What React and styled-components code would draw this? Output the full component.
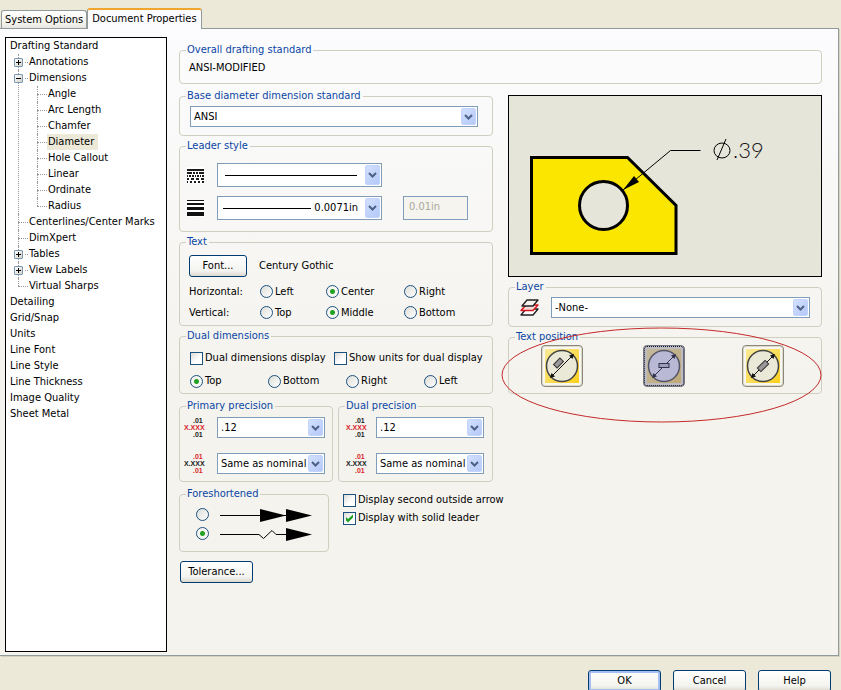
import React, { useId } from "react";
import styled, { createGlobalStyle, css } from "styled-components";

const colors = {
  face: "#ece9d8",
  border: "#d0cfbf",
  caption: "#0a46a5",
  field: "#7f9db9",
  buttonEdge: "#003c74",
};

const GlobalStyle = createGlobalStyle`
  *, *::before, *::after { box-sizing: border-box; }
  html { height: 100%; }
  body {
    margin: 0;
    height: 100%;
    overflow: hidden;
    background: ${colors.face};
    color: #000;
    font: 11px/14px "DejaVu Sans Condensed", "DejaVu Sans", sans-serif;
  }
  button, input, select { font: inherit; color: inherit; margin: 0; }
  svg { display: block; }
`;

/* ---------- window frame ---------- */

const Dialog = styled.div`
  display: flex;
  flex-direction: column;
  height: 100vh;
  padding: 8px 2px 0 0;
`;

const TabBar = styled.div`
  display: flex;
  align-items: flex-end;
  padding-left: 1px;
`;

const Tab = styled.button`
  position: relative;
  height: 18px;
  padding: 0 3px;
  border: 1px solid #919b9c;
  border-bottom: 0;
  border-radius: 3px 3px 0 0;
  background: linear-gradient(#fff, #f1f0ea 80%, #e6e4dc);
  white-space: nowrap;
  ${(p) =>
    p.$active &&
    css`
      height: 21px;
      margin-bottom: -1px;
      padding: 0 4px 2px;
      border-top: 2px solid #f0a52c;
      background: #fcfcfe;
      z-index: 1;
    `}
`;

const Page = styled.main`
  flex: 1;
  min-height: 0;
  display: flex;
  gap: 12px;
  padding: 8px 16px 3px 5px;
  border: 1px solid #919b9c;
  border-left: 0;
  background: linear-gradient(#fcfcfe, #f4f3ee 55%, #f4f3ee);
  box-shadow: 1px 1px 0 #d5d2c2;
`;

const Footer = styled.footer`
  display: flex;
  flex: none;
  justify-content: flex-end;
  gap: 12px;
  height: 34px;
  padding: 14px 8px 0 0;
`;

const PushButton = styled.button`
  flex: none;
  width: ${(p) => p.$width}px;
  height: 22px;
  padding: 0;
  border: 1px solid ${colors.buttonEdge};
  border-radius: 3px;
  background: linear-gradient(#fff, #f3f3ef 75%, #dcd8ce);
  box-shadow: ${(p) => (p.$primary ? "inset 0 0 0 2px #a5bff0" : "none")};
`;

/* ---------- navigation tree ---------- */

const TreeBox = styled.nav`
  flex: none;
  width: 162px;
  border: 1px solid #000;
  background: #fff;
`;

const Branch = styled.ul`
  list-style: none;
  margin: 0;
  padding: ${(p) => (p.$root ? "0 4px" : p.$deep ? "0 0 0 19px" : "0")};
`;

const Node = styled.li`
  position: relative;
  ${(p) =>
    !p.$root &&
    css`
      &::before {
        content: "";
        position: absolute;
        left: 8px;
        top: 0;
        height: ${p.$last ? "8px" : "100%"};
        border-left: 1px dotted #999;
      }
    `}
`;

const NodeRow = styled.div`
  display: flex;
  align-items: center;
  height: 16px;
  padding-left: ${(p) => (p.$root ? 0 : 8)}px;
`;

const Stem = styled.span`
  width: 10px;
  border-top: 1px dotted #999;
`;

const Toggle = styled.button`
  position: relative;
  flex: none;
  width: 9px;
  height: 9px;
  margin: 0 2px 0 -4px;
  padding: 0;
  border: 1px solid #7898b5;
  border-radius: 1px;
  background: linear-gradient(135deg, #fff, #d6d2c6);
`;

const ToggleStem = styled(Stem)`
  width: 3px;
`;

const NodeLink = styled.a`
  padding: 1px 4px 1px ${(p) => (p.$root ? 0 : 1)}px;
  color: inherit;
  text-decoration: none;
  white-space: nowrap;
  background: ${(p) => (p.$current ? colors.face : "transparent")};
`;

const tree = [
  {
    label: "Drafting Standard",
    children: [
      { label: "Annotations", state: "closed" },
      {
        label: "Dimensions",
        state: "open",
        children: [
          { label: "Angle" },
          { label: "Arc Length" },
          { label: "Chamfer" },
          { label: "Diameter", current: true },
          { label: "Hole Callout" },
          { label: "Linear" },
          { label: "Ordinate" },
          { label: "Radius" },
        ],
      },
      { label: "Centerlines/Center Marks" },
      { label: "DimXpert" },
      { label: "Tables", state: "closed" },
      { label: "View Labels", state: "closed" },
      { label: "Virtual Sharps" },
    ],
  },
  { label: "Detailing" },
  { label: "Grid/Snap" },
  { label: "Units" },
  { label: "Line Font" },
  { label: "Line Style" },
  { label: "Line Thickness" },
  { label: "Image Quality" },
  { label: "Sheet Metal" },
];

function TreeNodes({ items, level = 0 }) {
  const root = level === 0;
  return (
    <Branch $root={root} $deep={level > 1}>
      {items.map((item, i) => (
        <Node key={item.label} $root={root} $last={i === items.length - 1}>
          <NodeRow $root={root}>
            {!root && item.state && (
              <>
                <Toggle
                  aria-label={`${item.state === "open" ? "Collapse" : "Expand"} ${item.label}`}
                >
                  <svg width="7" height="7" stroke="#000" shapeRendering="crispEdges">
                    <path d={item.state === "open" ? "M1 3.5H6" : "M1 3.5H6M3.5 1V6"} />
                  </svg>
                </Toggle>
                <ToggleStem />
              </>
            )}
            {!root && !item.state && <Stem />}
            <NodeLink
              href="#"
              $root={root}
              $current={item.current}
              aria-current={item.current}
            >
              {item.label}
            </NodeLink>
          </NodeRow>
          {item.children && <TreeNodes items={item.children} level={level + 1} />}
        </Node>
      ))}
    </Branch>
  );
}

/* ---------- form parts ---------- */

const Form = styled.form`
  flex: 1;
  min-width: 0;
  padding-top: 6px;
`;

const Columns = styled.div`
  display: grid;
  grid-template-columns: 1fr 1fr;
  gap: 15px;
  margin-top: 5px;
`;

const Column = styled.div`
  min-width: 0;
  display: flex;
  flex-direction: column;
  gap: 3px;
`;

const PreviewColumn = styled(Column)`
  padding-top: 6px;
`;

const Group = styled.fieldset`
  position: relative;
  min-width: 0;
  margin: 0;
  padding: ${(p) => p.$pad || "0"};
  border: 1px solid ${colors.border};
  border-radius: 4px;
`;

const Caption = styled.legend`
  height: 14px;
  margin-left: ${(p) => p.$indent ?? 6}px;
  padding: 0 2px 0 1px;
  color: ${colors.caption};
  white-space: nowrap;
`;

const SelectFrame = styled.div`
  position: relative;
  width: 100%;
  height: ${(p) => p.$height || 21}px;
`;

const SelectInput = styled.select`
  appearance: none;
  width: 100%;
  height: 100%;
  padding: 0 ${(p) => (p.$right ? 23 : 17)}px 0 3px;
  border: 1px solid ${colors.field};
  border-radius: 0;
  background: #fff;
  text-align-last: ${(p) => (p.$right ? "right" : "left")};
`;

const SelectLine = styled.svg`
  position: absolute;
  inset: 0;
  pointer-events: none;
`;

const SelectArrow = styled.span`
  position: absolute;
  top: 2px;
  right: 2px;
  bottom: 2px;
  width: 15px;
  display: grid;
  place-items: center;
  border: 1px solid #c3d3fb;
  border-radius: 2px;
  background: linear-gradient(135deg, #d3e0fe, #b3c9f8);
  pointer-events: none;
`;

function Select({ label, value, height, right, line }) {
  return (
    <SelectFrame $height={height}>
      <SelectInput aria-label={label} defaultValue={value} $right={right}>
        <option value={value}>{value}</option>
      </SelectInput>
      {line && (
        <SelectLine width="100%" height="100%" stroke="#000" shapeRendering="crispEdges">
          <path d={line} />
        </SelectLine>
      )}
      <SelectArrow>
        <svg width="9" height="6" fill="none" stroke="#4d6185" strokeWidth="2">
          <path d="M1 1L4.5 4.5L8 1" />
        </svg>
      </SelectArrow>
    </SelectFrame>
  );
}

const Check = styled.label`
  display: inline-flex;
  align-items: center;
  gap: 2px;
  white-space: nowrap;
`;

const Radio = styled.input.attrs({ type: "radio" })`
  appearance: none;
  flex: none;
  width: 13px;
  height: 13px;
  border: 1px solid #1c5180;
  border-radius: 50%;
  background: linear-gradient(135deg, #dcdcd7, #fff);
  &:checked {
    background: radial-gradient(circle, #21a121 0 2px, #f6f6f3 3px);
  }
`;

const CheckBox = styled.input.attrs({ type: "checkbox" })`
  appearance: none;
  flex: none;
  width: 13px;
  height: 13px;
  border: 1px solid #1c5180;
  background: linear-gradient(135deg, #dcdcd7, #fff 60%);
`;

const TickBox = styled.span`
  position: relative;
  display: flex;
`;

const Tick = styled.svg`
  position: absolute;
  inset: 0;
  pointer-events: none;
`;

function CheckField({ label, checked }) {
  return (
    <Check>
      <TickBox>
        <CheckBox defaultChecked={checked} />
        {checked && (
          <Tick width="13" height="13" fill="#21a121">
            <path d="M3 5L5 7L10 2.500V5.500L5 10.500L3 8.500Z" />
          </Tick>
        )}
      </TickBox>
      {label}
    </Check>
  );
}

function RadioField({ name, label, checked }) {
  return (
    <Check>
      <Radio name={name} defaultChecked={checked} />
      {label}
    </Check>
  );
}

const StyleGrid = styled.div`
  display: grid;
  grid-template-columns: 17px 165px 73px;
  column-gap: 13px;
  row-gap: 9px;
  align-items: center;
`;

const ThicknessInput = styled.input`
  grid-column: 3;
  justify-self: end;
  width: 65px;
  height: 24px;
  padding: 0 5px 4px;
  border: 1px solid ${colors.field};
  background: #f5f4ef;
  color: #aca899;
`;

const FontRow = styled.div`
  display: flex;
  align-items: center;
  gap: 12px;
  margin-bottom: 4px;
`;

const AlignRow = styled.div`
  display: grid;
  grid-template-columns: 71px 66px 78px auto;
  align-items: center;
  height: 21px;
`;

const CheckRow = styled.div`
  display: grid;
  grid-template-columns: 144px auto;
  align-items: center;
  height: 20px;
  margin-bottom: 3px;
`;

const PositionRow = styled.div`
  display: grid;
  grid-template-columns: repeat(4, 78px);
  align-items: center;
  height: 20px;
`;

const PrecisionPair = styled.div`
  display: grid;
  grid-template-columns: 154px 155px;
  justify-content: space-between;
  margin: 2px 0;
`;

const PrecisionGrid = styled.div`
  display: grid;
  grid-template-columns: 1fr 108px;
  row-gap: 15px;
  align-items: center;
`;

const LeaderRow = styled.div`
  display: flex;
  align-items: flex-start;
  gap: 14px;
`;

const ForeGroup = styled(Group)`
  flex: none;
  width: 150px;
`;

const ArrowOption = styled.label`
  display: flex;
  align-items: center;
  gap: 11px;
  height: 19px;
`;

const OptionStack = styled.div`
  display: flex;
  flex-direction: column;
  gap: 4px;
  padding-top: 6px;
`;

const ToleranceRow = styled.div`
  padding: 6px 0 0 1px;
`;

const Preview = styled.div`
  height: 182px;
  border: 1px solid #000;
  background: #e5e5da;
  overflow: hidden;
`;

const LayerRow = styled.div`
  display: grid;
  grid-template-columns: 19px 1fr;
  align-items: center;
  gap: 12px;
`;

const PlacementRow = styled.div`
  display: grid;
  grid-template-columns: 102px 99px 42px;
`;

const PlacementButton = styled.button`
  width: 42px;
  height: 42px;
  padding: 2px;
  border: 1px solid ${(p) => (p.$pressed ? "#77777f" : "#8a877b")};
  border-radius: 4px;
  background: ${(p) => (p.$pressed ? "#bdbcc2" : "#f7f6f0")};
  box-shadow: ${(p) => (p.$pressed ? "none" : "inset 0 0 0 1px #dcd9ca")};
  outline: ${(p) => (p.$pressed ? "1px dotted #111130" : "none")};
  outline-offset: -2px;
`;

const Ring = styled.svg`
  position: absolute;
  left: -7px;
  top: -17px;
  width: calc(100% + 7px);
  height: 96px;
  overflow: visible;
  pointer-events: none;
`;

/* ---------- drawings ---------- */

function LineFontIcon() {
  return (
    <svg width="17" height="17" shapeRendering="crispEdges" fill="#1c1c1c">
      <rect width="17" height="17" fill="#fff" />
      <path d="M0 2H17V4H0Z" />
      <path d="M0 5H5V7H0ZM6 5H8V7H6ZM9 5H11V7H9ZM12 5H17V7H12Z" />
      <path d="M0 8H1V10H0ZM2 8H4V10H2ZM5 8H7V10H5ZM8 8H9V10H8ZM10 8H12V10H10ZM13 8H14V10H13ZM15 8H17V10H15Z" />
      <path d="M0 11H2V13H0ZM4 11H7V13H4ZM9 11H12V13H9ZM14 11H17V13H14Z" />
      <path d="M0 14H1V16H0ZM3 14H5V16H3ZM7 14H9V16H7ZM11 14H13V16H11ZM15 14H17V16H15Z" />
    </svg>
  );
}

function LineThicknessIcon() {
  return (
    <svg width="17" height="17" shapeRendering="crispEdges" fill="#111">
      <rect width="17" height="17" fill="#fff" />
      <path d="M0 0H17V1H0ZM0 3H17V5H0ZM0 7H17V10H0ZM0 12H17V16H0Z" />
    </svg>
  );
}

const TinyText = styled.text`
  font: bold 7px "Liberation Sans", sans-serif;
`;

function PrecisionIcon({ tolerance }) {
  const main = tolerance ? "#222" : "#d8262b";
  const side = tolerance ? "#d8262b" : "#222";
  return (
    <svg width="22" height="20">
      <TinyText x="9" y="5" fill={side}>.01</TinyText>
      <TinyText x="0" y="12" fill={main}>X.XXX</TinyText>
      <TinyText x="9" y="19" fill={side}>.01</TinyText>
    </svg>
  );
}

function LayerIcon() {
  return (
    <svg width="19" height="18" strokeWidth="1.400" strokeLinejoin="round">
      <path d="M1 16L6 10H18L13 16Z" fill="#fff" stroke="#222" />
      <path d="M1 11.500L6 6H18L13 11.500Z" fill="#f4dcd8" stroke="#d8161b" />
      <path d="M2 7L7 1H18L13 7Z" fill="#f4f3ee" stroke="#222" />
    </svg>
  );
}

function ForeshortArrow({ zigzag }) {
  return (
    <svg width="92" height="14" fill="none" stroke="#000">
      {zigzag ? (
        <path d="M0 7.500H39L43.500 11.500L52 3.500L56 7.500H66" />
      ) : (
        <path d="M0 7.500H66" />
      )}
      {!zigzag && <path d="M40 1L66 7.500L40 14Z" fill="#000" stroke="none" />}
      <path d="M66 1L92 7.500L66 14Z" fill="#000" stroke="none" />
    </svg>
  );
}

const DimensionText = styled.text`
  font: 300 22px Lato, sans-serif;
`;

function PartPreview() {
  return (
    <svg width="312" height="180" fill="none" stroke="#000">
      <path d="M22.500 61.500H118.500L167 109.500V157.500H22.500Z" fill="#fbe600" strokeWidth="3" />
      <circle cx="94.500" cy="109.500" r="24" fill="#e5e5da" strokeWidth="3" />
      <path d="M114 94L161.500 54.500H191.500" />
      <path d="M114 94L125 80L130 86Z" fill="#000" stroke="none" />
      <ellipse cx="213" cy="54.500" rx="8" ry="7.500" />
      <path d="M208 64L217 43" />
      <DimensionText x="224" y="62" fill="#111" stroke="none">
        .39
      </DimensionText>
    </svg>
  );
}

function PlacementIcon({ kind }) {
  const id = useId();
  const pressed = kind === "horizontal";
  const ink = pressed ? "#33334a" : "#111";
  return (
    <svg width="36" height="36">
      <defs>
        <linearGradient id={id} x1="0" y1="0" x2="1" y2="1">
          <stop offset="0" stopColor={pressed ? "#c3b99c" : "#f8ea98"} />
          <stop offset="1" stopColor={pressed ? "#bfa978" : "#fcd01c"} />
        </linearGradient>
      </defs>
      <rect x="1" y="1" width="34" height="34" fill={`url(#${id})`} />
      <circle
        cx="18"
        cy="18"
        r="15.500"
        fill={pressed ? "#b9b9d6" : "#eae8d6"}
        stroke={pressed ? "#55556a" : "#444"}
        strokeWidth="1.500"
      />
      <path d="M8 28L28 8" stroke={ink} />
      <path d="M30 6L28.500 11L25 7.500ZM6 30L7.500 25L11 28.500Z" fill={ink} />
      {kind === "above" && (
        <rect x="10" y="12.500" width="9" height="5" fill="#999" stroke="#333" transform="rotate(-45 14.500 15)" />
      )}
      {kind === "horizontal" && (
        <rect x="13" y="15.500" width="10" height="4" fill="#9c9cbc" stroke={ink} />
      )}
      {kind === "inline" && (
        <rect x="12.500" y="15.500" width="11" height="5" fill="#999" stroke="#333" transform="rotate(-45 18 18)" />
      )}
    </svg>
  );
}

function PrecisionGroup({ title, pad, indent }) {
  return (
    <Group $pad={pad}>
      <Caption $indent={indent}>{title}</Caption>
      <PrecisionGrid>
        <PrecisionIcon />
        <Select label={title} value=".12" />
        <PrecisionIcon tolerance />
        <Select label={`${title} tolerance`} value="Same as nominal" />
      </PrecisionGrid>
    </Group>
  );
}

/* ---------- page ---------- */

export default function App() {
  return (
    <>
      <GlobalStyle />
      <Dialog>
        <TabBar role="tablist">
          <Tab role="tab" aria-selected="false">System Options</Tab>
          <Tab role="tab" aria-selected="true" $active>Document Properties</Tab>
        </TabBar>
        <Page>
          <TreeBox aria-label="Document property pages">
            <TreeNodes items={tree} />
          </TreeBox>
          <Form>
            <Group $pad="4px 9px 8px">
              <Caption $indent={-3}>Overall drafting standard</Caption>
              ANSI-MODIFIED
            </Group>
            <Columns>
              <Column>
                <Group $pad="3px 14px 8px 10px">
                  <Caption $indent={-4}>Base diameter dimension standard</Caption>
                  <Select label="Base diameter dimension standard" value="ANSI" />
                </Group>
                <Group $pad="10px 7px 11px">
                  <Caption $indent={-1}>Leader style</Caption>
                  <StyleGrid>
                    <LineFontIcon />
                    <Select label="Leader line style" value="" height={24} line="M8 12.500H140" />
                    <span />
                    <LineThicknessIcon />
                    <Select label="Leader line thickness" value="0.0071in" height={24} right line="M6 12.500H94" />
                    <ThicknessInput aria-label="Custom thickness" defaultValue="0.01in" disabled />
                  </StyleGrid>
                </Group>
                <Group $pad="6px 9px 2px">
                  <Caption $indent={-3}>Text</Caption>
                  <FontRow>
                    <PushButton type="button" $width={58}>Font...</PushButton>
                    Century Gothic
                  </FontRow>
                  <AlignRow>
                    Horizontal:
                    <RadioField name="horizontal" label="Left" />
                    <RadioField name="horizontal" label="Center" checked />
                    <RadioField name="horizontal" label="Right" />
                  </AlignRow>
                  <AlignRow>
                    Vertical:
                    <RadioField name="vertical" label="Top" />
                    <RadioField name="vertical" label="Middle" checked />
                    <RadioField name="vertical" label="Bottom" />
                  </AlignRow>
                </Group>
                <Group $pad="5px 0 2px 10px">
                  <Caption $indent={-4}>Dual dimensions</Caption>
                  <CheckRow>
                    <CheckField label="Dual dimensions display" />
                    <CheckField label="Show units for dual display" />
                  </CheckRow>
                  <PositionRow>
                    <RadioField name="dual" label="Top" checked />
                    <RadioField name="dual" label="Bottom" />
                    <RadioField name="dual" label="Right" />
                    <RadioField name="dual" label="Left" />
                  </PositionRow>
                </Group>
                <PrecisionPair>
                  <PrecisionGroup title="Primary precision" pad="4px 7px 7px 4px" indent={2} />
                  <PrecisionGroup title="Dual precision" pad="4px 8px 7px 7px" indent={-1} />
                </PrecisionPair>
                <LeaderRow>
                  <ForeGroup $pad="4px 10px 8px 16px">
                    <Caption $indent={-10}>Foreshortened</Caption>
                    <ArrowOption>
                      <Radio name="foreshortened" aria-label="Double arrow" />
                      <ForeshortArrow />
                    </ArrowOption>
                    <ArrowOption>
                      <Radio name="foreshortened" aria-label="Zigzag" defaultChecked />
                      <ForeshortArrow zigzag />
                    </ArrowOption>
                  </ForeGroup>
                  <OptionStack>
                    <CheckField label="Display second outside arrow" />
                    <CheckField label="Display with solid leader" checked />
                  </OptionStack>
                </LeaderRow>
                <ToleranceRow>
                  <PushButton type="button" $width={73}>Tolerance...</PushButton>
                </ToleranceRow>
              </Column>
              <PreviewColumn>
                <Preview>
                  <PartPreview />
                </Preview>
                <Group $pad="3px 11px 8px">
                  <Caption $indent={-5}>Layer</Caption>
                  <LayerRow>
                    <LayerIcon />
                    <Select label="Layer" value="-None-" />
                  </LayerRow>
                </Group>
                <Group $pad="1px 32px 6px">
                  <Caption $indent={-26}>Text position</Caption>
                  <PlacementRow>
                    <PlacementButton type="button" aria-label="Above leader">
                      <PlacementIcon kind="above" />
                    </PlacementButton>
                    <PlacementButton type="button" aria-label="Horizontal" aria-pressed="true" $pressed>
                      <PlacementIcon kind="horizontal" />
                    </PlacementButton>
                    <PlacementButton type="button" aria-label="In line">
                      <PlacementIcon kind="inline" />
                    </PlacementButton>
                  </PlacementRow>
                  <Ring aria-hidden="true" fill="none" stroke="#c42a2a">
                    <ellipse cx="50%" cy="50%" rx="50%" ry="47" />
                  </Ring>
                </Group>
              </PreviewColumn>
            </Columns>
          </Form>
        </Page>
        <Footer>
          <PushButton type="button" $width={73} $primary>OK</PushButton>
          <PushButton type="button" $width={73}>Cancel</PushButton>
          <PushButton type="button" $width={73}>Help</PushButton>
        </Footer>
      </Dialog>
    </>
  );
}
